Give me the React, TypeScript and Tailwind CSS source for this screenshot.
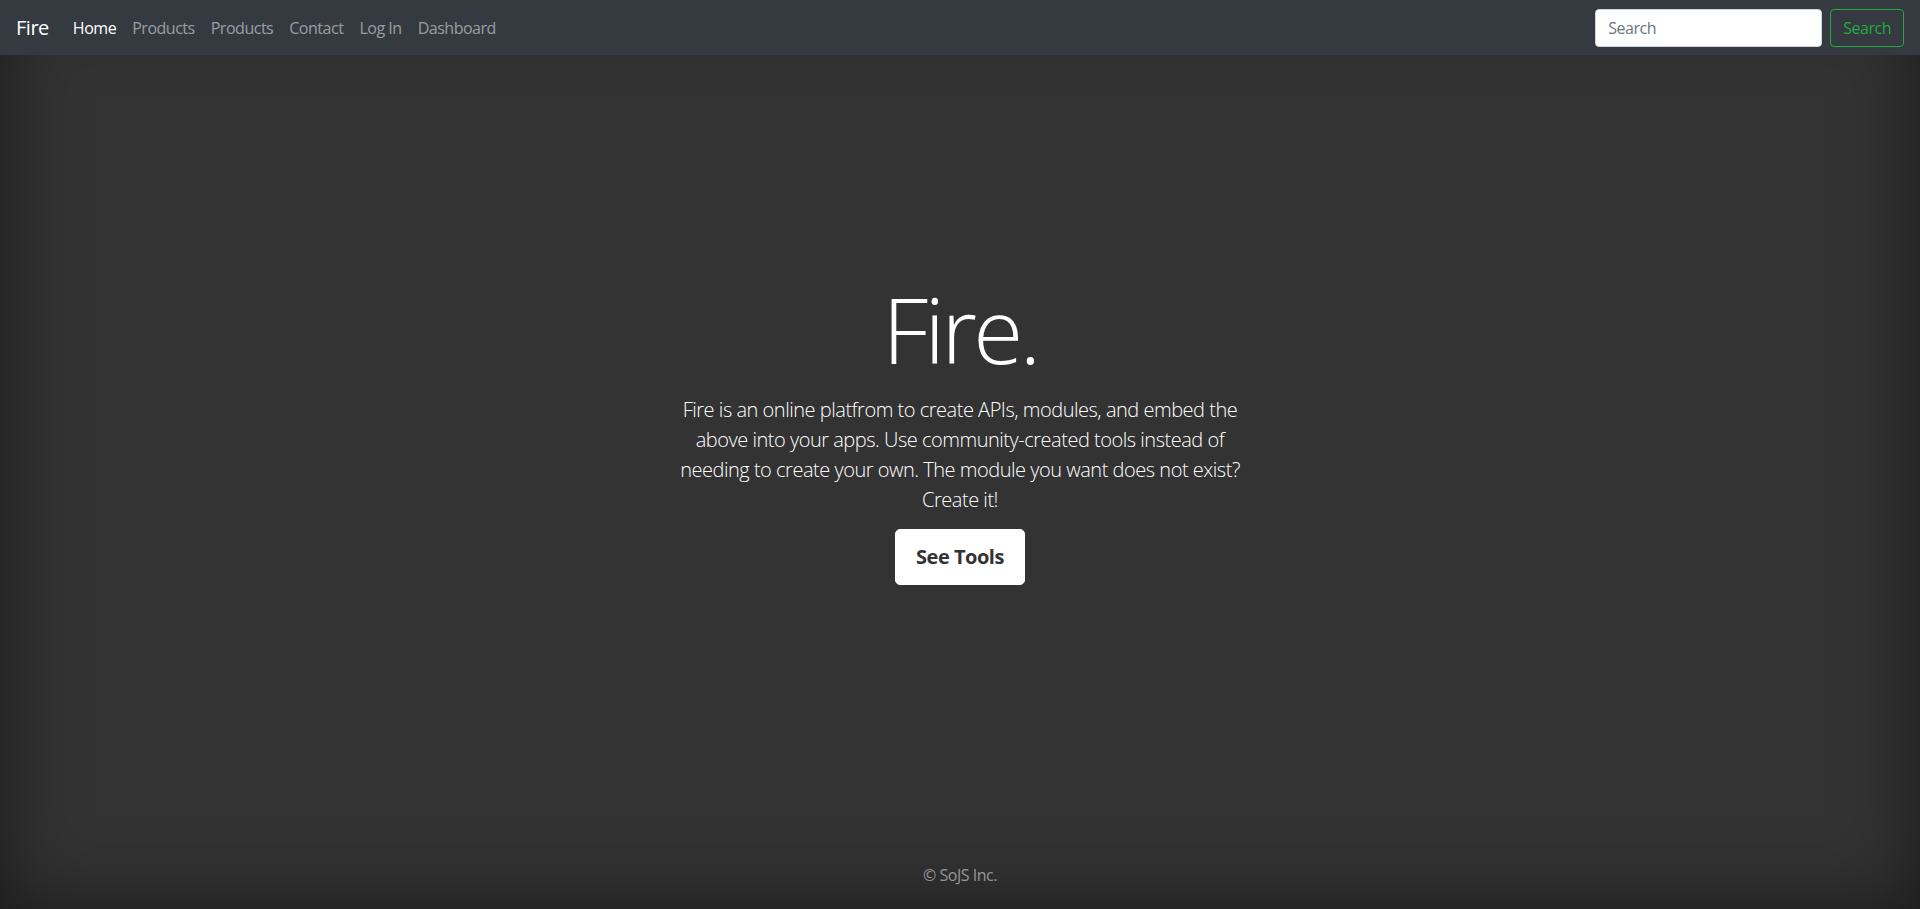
const links = [
  { label: 'Home', active: true },
  { label: 'Products' },
  { label: 'Products' },
  { label: 'Contact' },
  { label: 'Log In' },
  { label: 'Dashboard' },
];

export default function App() {
  return (
    <div className="h-screen flex flex-col bg-[#333] text-white shadow-[inset_0_0_5rem_rgba(0,0,0,0.5)] font-['Open_Sans',sans-serif] tracking-[-0.03em]">
      {/* Navbar */}
      <nav className="h-[55px] shrink-0 bg-[#343a40] flex items-center px-4">
        <a href="#" className="text-[20px] leading-[30px] text-white mr-4 mt-px">
          Fire
        </a>
        <ul className="flex items-center mt-px">
          {links.map((link, i) => (
            <li key={i}>
              <a
                href="#"
                className={
                  'block px-2 text-base leading-6 ' +
                  (link.active ? 'text-white' : 'text-white/50 hover:text-white/75')
                }
              >
                {link.label}
              </a>
            </li>
          ))}
        </ul>
        <form className="ml-auto flex items-center gap-2" onSubmit={(e) => e.preventDefault()}>
          <input
            type="search"
            placeholder="Search"
            className="w-[227px] h-[38px] rounded bg-white border border-[#ced4da] px-3 text-base text-[#495057] placeholder:text-[#6c757d] outline-none"
          />
          <button
            type="submit"
            className="h-[38px] px-3 rounded border border-[#28a745] text-[#28a745] text-base hover:bg-[#28a745] hover:text-white"
          >
            Search
          </button>
        </form>
      </nav>

      {/* Hero */}
      <main className="flex-1 flex flex-col items-center justify-center text-center pb-[62px]">
        <h1 className="text-[91px] leading-[115px] font-light tracking-[-0.04em] mb-2">Fire.</h1>
        <p className="max-w-[580px] text-[20px] leading-[30px] font-light mb-[14px]">
          Fire is an online platfrom to create APIs, modules, and embed the above into your apps. Use
          community-created tools instead of needing to create your own. The module you want does not
          exist? Create it!
        </p>
        <a
          href="#"
          className="inline-block px-5 py-3 rounded-[5px] bg-white border border-white text-[#333] text-[20px] leading-[30px] font-bold"
        >
          See Tools
        </a>
      </main>

      {/* Footer */}
      <footer className="pb-[22px] text-center text-base leading-6 text-white/50">
        <p>© SoJS Inc.</p>
      </footer>
    </div>
  );
}
